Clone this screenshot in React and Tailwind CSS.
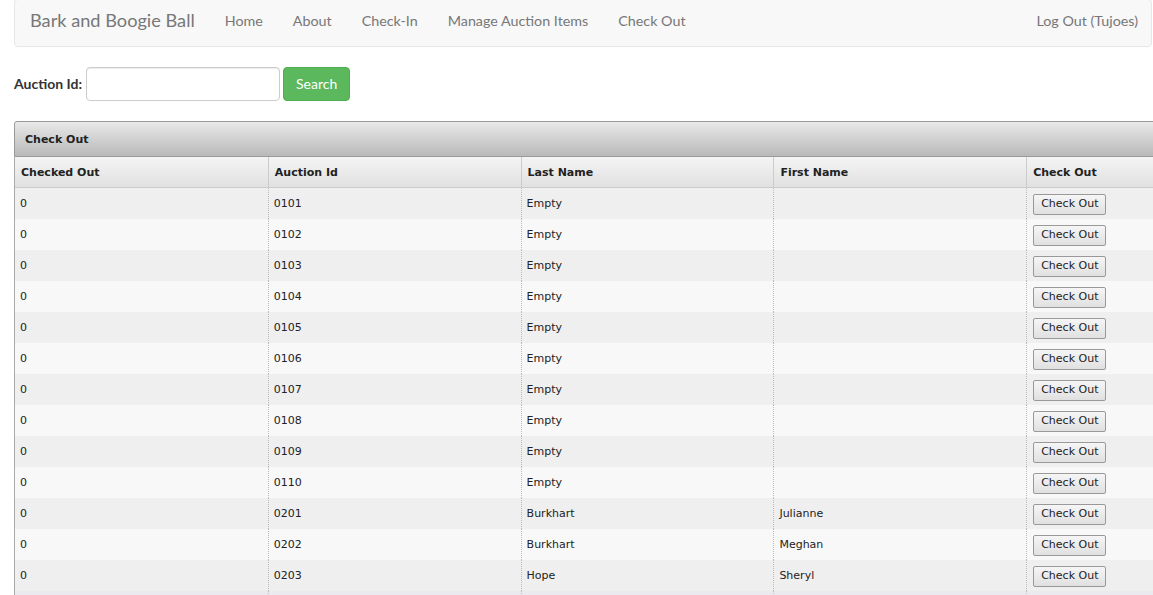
const rows = [
  { id: '0101', last: 'Empty', first: '' },
  { id: '0102', last: 'Empty', first: '' },
  { id: '0103', last: 'Empty', first: '' },
  { id: '0104', last: 'Empty', first: '' },
  { id: '0105', last: 'Empty', first: '' },
  { id: '0106', last: 'Empty', first: '' },
  { id: '0107', last: 'Empty', first: '' },
  { id: '0108', last: 'Empty', first: '' },
  { id: '0109', last: 'Empty', first: '' },
  { id: '0110', last: 'Empty', first: '' },
  { id: '0201', last: 'Burkhart', first: 'Julianne' },
  { id: '0202', last: 'Burkhart', first: 'Meghan' },
  { id: '0203', last: 'Hope', first: 'Sheryl' },
];

const navLinks = ['Home', 'About', 'Check-In', 'Manage Auction Items', 'Check Out'];

export default function App() {
  return (
    <div className="w-[1153px] h-[595px] overflow-hidden bg-white">
      {/* Navbar */}
      <nav className="ml-[14px] mt-[-1px] w-[1138px] h-[48px] flex items-center justify-between pb-[5px] bg-[#f8f8f8] border border-[#e7e7e7] rounded-[4px] font-['Lato',sans-serif]">
        <div className="flex items-center">
          <span className="pl-[15px] pr-[15px] text-[18.2px] text-[#777]">Bark and Boogie Ball</span>
          {navLinks.map((l) => (
            <a key={l} className="px-[15px] text-[14.3px] text-[#777]">{l}</a>
          ))}
        </div>
        <a className="pr-[13px] text-[14.3px] text-[#777]">Log Out (Tujoes)</a>
      </nav>

      {/* Search */}
      <div className="ml-[14px] mt-[20px] flex items-center font-['Lato',sans-serif]">
        <label className="text-[14px] font-bold text-[#333] mr-[4px] pb-[2px]">Auction Id:</label>
        <input className="w-[194px] h-[34px] border border-[#ccc] rounded-[4px] bg-white px-3 shadow-[inset_0_1px_1px_rgba(0,0,0,0.075)]" />
        <button className="ml-[3px] h-[34px] px-[12px] rounded-[4px] bg-[#5cb85c] border border-[#4cae4c] text-white text-[14px] pb-[2px]">Search</button>
      </div>

      {/* Panel */}
      <div className="ml-[14px] mt-[20px] w-[1265px] font-['DejaVu_Sans',Verdana,sans-serif] text-[11px] text-[#222]">
        <div className="h-[36px] flex items-center pl-[10px] pt-[2px] font-bold text-[#222] bg-gradient-to-b from-[#e9e9e9] to-[#b9b9b9] border border-[#999] rounded-tl-[3px]">
          Check Out
        </div>
        <div className="border-l border-[#aaa]">
          <div className="grid grid-cols-5 h-[31px] bg-gradient-to-b from-[#f4f4f4] to-[#e1e1e1] border-b border-[#ccc] font-bold">
            {['Checked Out', 'Auction Id', 'Last Name', 'First Name', 'Check Out'].map((h, i) => (
              <div key={h} className={`flex items-center pl-[6px] pt-[2px] ${i > 0 ? 'border-l border-[#ccc]' : ''}`}>{h}</div>
            ))}
          </div>
          {rows.map((r, idx) => (
            <div key={r.id} className={`grid grid-cols-5 h-[31px] ${idx % 2 === 0 ? 'bg-[#efefef]' : 'bg-[#f8f8f8]'}`}>
              <div className="flex items-center pl-[5px] pt-[2px]">0</div>
              <div className="flex items-center pl-[5px] pt-[2px] border-l border-dotted border-[#bbb]">{r.id}</div>
              <div className="flex items-center pl-[5px] pt-[2px] border-l border-dotted border-[#bbb]">{r.last}</div>
              <div className="flex items-center pl-[5px] pt-[2px] border-l border-dotted border-[#bbb]">{r.first}</div>
              <div className="flex items-center pl-[6px] pt-[1px] border-l border-dotted border-[#bbb]">
                <button className="h-[21px] px-[7px] border border-[#999] rounded-[2px] bg-gradient-to-b from-[#f6f6f6] to-[#e0e0e0] text-[11px] text-[#222] font-['DejaVu_Sans',Verdana,sans-serif]">
                  Check Out
                </button>
              </div>
            </div>
          ))}
          <div className="grid grid-cols-5 h-[31px] bg-[#ebebef]">
            <div></div>
            <div className="border-l border-dotted border-[#bbb]"></div>
            <div className="border-l border-dotted border-[#bbb]"></div>
            <div className="border-l border-dotted border-[#bbb]"></div>
            <div className="border-l border-dotted border-[#bbb]"></div>
          </div>
        </div>
      </div>
    </div>
  );
}
